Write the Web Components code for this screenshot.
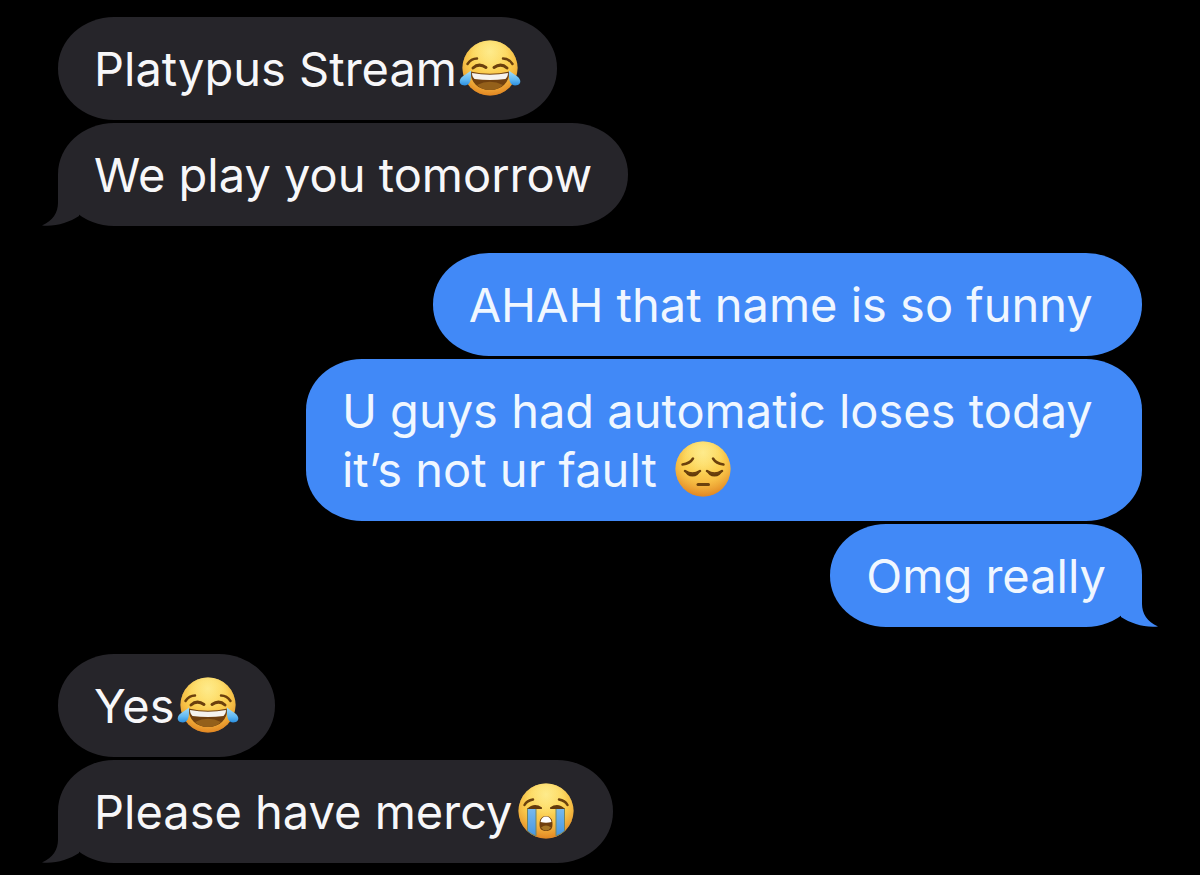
<!DOCTYPE html>
<html lang="en">
<head>
<meta charset="utf-8">
<meta name="viewport" content="width=device-width, initial-scale=1">
<title>Messages</title>
<style>
  html {
    background: #000;
  }

  body {
    margin: 0;
    font-family: Inter, "Liberation Sans", sans-serif;
    font-size: 47px;
    line-height: 59px;
  }
</style>
</head>
<body>
<message-thread>
  <message-group>
    <message-bubble>Platypus Stream<emoji-face name="joy"></emoji-face></message-bubble>
    <message-bubble tail>We play you tomorrow</message-bubble>
  </message-group>
  <message-group sent>
    <message-bubble sent>AHAH that name is so funny&nbsp;</message-bubble>
    <message-bubble sent>U guys had automatic loses today&nbsp;<br>it’s not ur fault <emoji-face name="pensive"></emoji-face></message-bubble>
    <message-bubble sent tail>Omg really</message-bubble>
  </message-group>
  <message-group>
    <message-bubble>Yes<emoji-face name="joy"></emoji-face></message-bubble>
    <message-bubble tail>Please have mercy<emoji-face name="sob"></emoji-face></message-bubble>
  </message-group>
</message-thread>

<script>
/**
 * Scrolling column of message groups
 * @class MessageThread
 */
class MessageThread extends HTMLElement {
  constructor() {
    super();
    this.attachShadow({ mode: 'open' });
    this.shadowRoot.innerHTML = `
      <style>
        :host {
          display: flex;
          flex-direction: column;
          gap: 27px;
          padding: 17px 58px 12px;
        }
      </style>
      <slot></slot>
    `;
  }
}

/**
 * Consecutive bubbles from one sender
 * @class MessageGroup
 * @attr {boolean} sent - Align to the right
 */
class MessageGroup extends HTMLElement {
  constructor() {
    super();
    this.attachShadow({ mode: 'open' });
    this.shadowRoot.innerHTML = `
      <style>
        :host {
          display: flex;
          flex-direction: column;
          align-items: flex-start;
          gap: 3px;
        }

        :host([sent]) {
          align-items: flex-end;
        }
      </style>
      <slot></slot>
    `;
  }
}

/**
 * Single message bubble
 * @class MessageBubble
 * @attr {boolean} sent - Blue outgoing style
 * @attr {boolean} tail - Show the tail in the bottom corner
 */
class MessageBubble extends HTMLElement {
  constructor() {
    super();
    this.attachShadow({ mode: 'open' });
    this.shadowRoot.innerHTML = `
      <style>
        :host {
          --bubble: #26252a;
          display: block;
          position: relative;
          box-sizing: border-box;
          max-width: 80%;
          padding: 22px 36px;
          border-radius: 56px / 51px;
          background: var(--bubble);
          color: #f7f7f9;
        }

        :host([sent]) {
          --bubble: #4189f7;
          color: #f0f7ff;
        }

        .tail {
          display: none;
          position: absolute;
          left: -16px;
          bottom: 0;
          fill: var(--bubble);
        }

        :host([tail]) .tail {
          display: block;
        }

        :host([sent]) .tail {
          left: auto;
          right: -16px;
          transform: scaleX(-1);
        }
      </style>
      <svg class="tail" width="38" height="52" viewBox="0 0 38 52" aria-hidden="true">
        <path d="M16 0V29C16 38 11 47 0 51.500C13 53 27 48.500 37 42V0Z"/>
      </svg>
      <slot></slot>
    `;
  }
}

const FACES = {
  joy: {
    label: 'face with tears of joy',
    art: `
      <path class="line" d="M8.500 25Q12 19.500 18 19.500M53.500 25Q50 19.500 44 19.500"/>
      <path class="line thick" d="M14 29Q20 23.500 27 28.500M35 28.500Q42 23.500 48 29"/>
      <path fill="#70400f" d="M11.500 32.500Q31 37 50.500 32.500C50.500 43 43 51 31 51S11.500 43 11.500 32.500Z"/>
      <path fill="#94601a" d="M18 46Q31 39.500 44 46Q39 51 31 51T18 46Z"/>
      <path fill="#f6f3ee" d="M13 34Q31 37.500 49 34C49 37 48 38.500 46.500 40Q31 42 15.500 40C14 38.500 13 37 13 34Z"/>
      <path fill="url(#tear)" d="M12 31.500C12.500 38 12 46.500 6 46.500C1.500 46.500 0 43.500 1 41C2 37 7 36 12 31.500Z"/>
      <path fill="url(#tear)" d="M50 31.500C49.500 38 50 46.500 56 46.500C60.500 46.500 62 43.500 61 41C60 37 55 36 50 31.500Z"/>
    `
  },
  pensive: {
    label: 'pensive face',
    art: `
      <path class="line" d="M10.500 24.500Q18 23.500 21 18.500M51.500 24.500Q44 23.500 41 18.500"/>
      <path fill="#633a0b" d="M12.500 30.500Q20.500 35.500 28.500 30.500Q26.500 36.500 20.500 36.500T12.500 30.500ZM34.500 30.500Q42.500 35.500 50.500 30.500Q48.500 36.500 42.500 36.500T34.500 30.500Z"/>
      <path class="line" d="M13 31Q20.500 36 28 31M35 31Q42.500 36 50 31"/>
      <path class="line thick" d="M26 44.500H36.500"/>
    `
  },
  sob: {
    label: 'loudly crying face',
    art: `
      <path fill="url(#stream)" stroke="#6f8668" stroke-width="1" d="M12.500 26.500H21V54Q16 52 12.500 49ZM41 26.500H49.500V49Q46 52 41 54Z"/>
      <path class="line" d="M9.500 23Q12 18.500 18 17.500M52.500 23Q50 18.500 44 17.500"/>
      <path fill="#633a0b" d="M12 27Q19 20 27 25.500Q27.500 27 26 27ZM50 27Q43 20 35 25.500Q34.500 27 36 27Z"/>
      <path fill="#70400f" d="M31 34C35 34 37.500 37 37.500 42S35.500 49 31 49S24.500 47 24.500 42S27 34 31 34Z"/>
      <path fill="#fff" d="M31 34.500C34 34.500 36 36.500 36.500 40Q31 41.500 25.500 40C26 36.500 28 34.500 31 34.500Z"/>
      <path fill="#a67627" d="M26 45.500Q31 41.500 36 45.500Q34 48.500 31 48.500T26 45.500Z"/>
    `
  }
};

/**
 * Inline emoji drawn as SVG
 * @class EmojiFace
 * @attr {string} name - One of the FACES keys
 */
class EmojiFace extends HTMLElement {
  constructor() {
    super();
    this.attachShadow({ mode: 'open' });
  }

  connectedCallback() {
    const face = FACES[this.getAttribute('name')];
    if (!face) return;

    this.shadowRoot.innerHTML = `
      <style>
        :host {
          display: inline-flex;
          align-items: flex-start;
          height: 59px;
          padding-left: 2px;
          vertical-align: top;
        }

        svg {
          display: block;
          width: 62px;
          height: 58px;
        }

        .line {
          fill: none;
          stroke: #6b400d;
          stroke-width: 2.500;
          stroke-linecap: round;
        }

        .thick {
          stroke-width: 3;
        }
      </style>
      <svg viewBox="0 0 62 58" role="img" aria-label="${face.label}">
        <defs>
          <linearGradient id="skin" x2="0" y2="1">
            <stop offset="0" stop-color="#fbdb62"/>
            <stop offset=".5" stop-color="#fac646"/>
            <stop offset="1" stop-color="#e98f25"/>
          </linearGradient>
          <radialGradient id="rim" cx=".5" cy=".4" r=".62">
            <stop offset="0" stop-color="#ffe36a" stop-opacity=".6"/>
            <stop offset=".55" stop-color="#ffd858" stop-opacity=".4"/>
            <stop offset="1" stop-color="#d9791c" stop-opacity=".6"/>
          </radialGradient>
          <radialGradient id="shine" cx=".5" cy=".2" r=".4">
            <stop offset="0" stop-color="#fff3a0" stop-opacity=".7"/>
            <stop offset="1" stop-color="#fff3a0" stop-opacity="0"/>
          </radialGradient>
          <linearGradient id="tear" x2="0" y2="1">
            <stop offset="0" stop-color="#a9def7"/>
            <stop offset=".6" stop-color="#62b9f2"/>
            <stop offset="1" stop-color="#2a8fe0"/>
          </linearGradient>
          <linearGradient id="stream" x2="0" y2="1">
            <stop offset="0" stop-color="#78b9ee"/>
            <stop offset="1" stop-color="#4796df"/>
          </linearGradient>
        </defs>
        <circle cx="31" cy="29" r="27.500" fill="url(#skin)"/>
        <circle cx="31" cy="29" r="27.500" fill="url(#rim)"/>
        <circle cx="31" cy="29" r="27.500" fill="url(#shine)"/>
        ${face.art}
      </svg>
    `;
  }
}

customElements.define('message-thread', MessageThread);
customElements.define('message-group', MessageGroup);
customElements.define('message-bubble', MessageBubble);
customElements.define('emoji-face', EmojiFace);
</script>
</body>
</html>
